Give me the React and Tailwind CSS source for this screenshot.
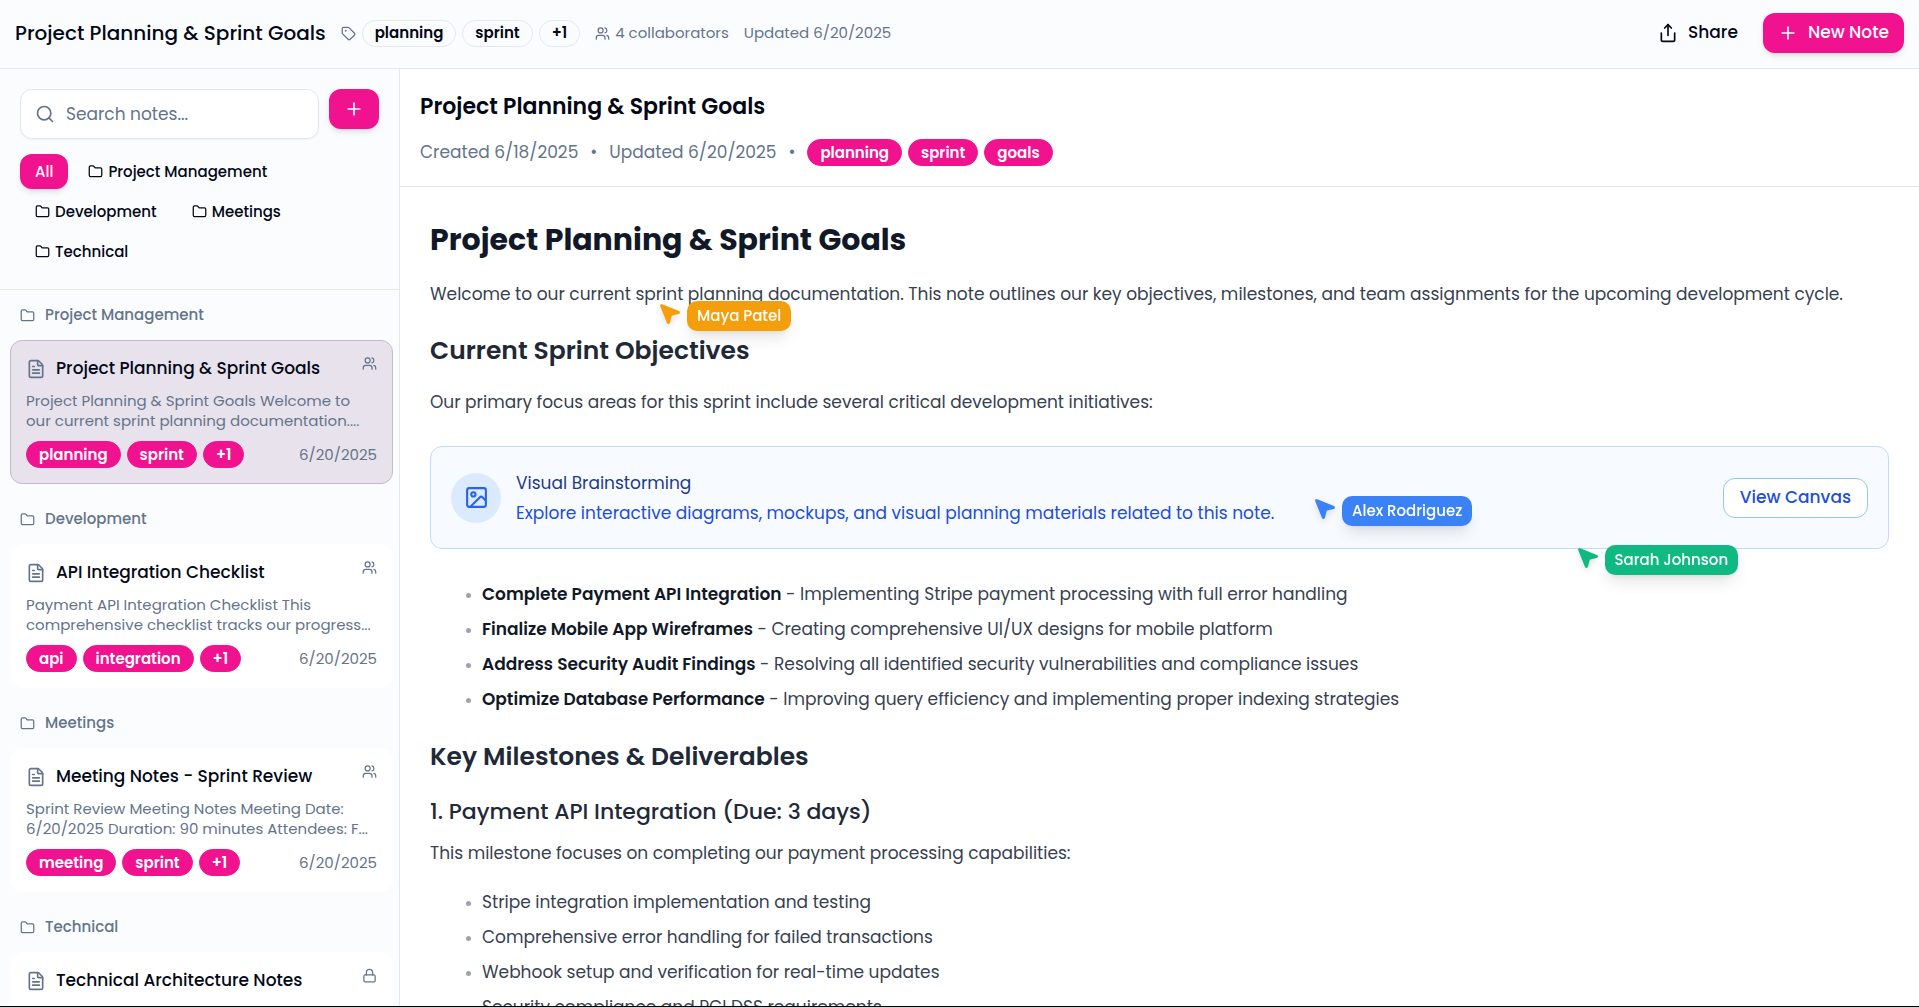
import React, { useState } from 'react';
import { FileText, Folder, Image, Lock, MousePointer2, Plus, Search, Share, Tag, Users } from 'lucide-react';
import clsx from 'clsx';

const categories = ['Project Management', 'Development', 'Meetings', 'Technical'];

const notes = [
  {
    id: 1,
    category: 'Project Management',
    title: 'Project Planning & Sprint Goals',
    preview: 'Project Planning & Sprint Goals Welcome to our current sprint planning documentation....',
    tags: ['planning', 'sprint', '+1'],
    date: '6/20/2025',
    shared: true,
  },
  {
    id: 2,
    category: 'Development',
    title: 'API Integration Checklist',
    preview: 'Payment API Integration Checklist This comprehensive checklist tracks our progress...',
    tags: ['api', 'integration', '+1'],
    date: '6/20/2025',
    shared: true,
  },
  {
    id: 3,
    category: 'Meetings',
    title: 'Meeting Notes - Sprint Review',
    preview: 'Sprint Review Meeting Notes Meeting Date: 6/20/2025 Duration: 90 minutes Attendees: F...',
    tags: ['meeting', 'sprint', '+1'],
    date: '6/20/2025',
    shared: true,
  },
  {
    id: 4,
    category: 'Technical',
    title: 'Technical Architecture Notes',
    preview: '',
    tags: [],
    date: '',
    shared: false,
  },
];

const objectives = [
  ['Complete Payment API Integration', 'Implementing Stripe payment processing with full error handling'],
  ['Finalize Mobile App Wireframes', 'Creating comprehensive UI/UX designs for mobile platform'],
  ['Address Security Audit Findings', 'Resolving all identified security vulnerabilities and compliance issues'],
  ['Optimize Database Performance', 'Improving query efficiency and implementing proper indexing strategies'],
];

const deliverables = [
  'Stripe integration implementation and testing',
  'Comprehensive error handling for failed transactions',
  'Webhook setup and verification for real-time updates',
  'Security compliance and PCI DSS requirements',
];

// Cursor positions are a share of the window
const cursors = [
  { name: 'Maya Patel', x: 34.24, y: 29.9, icon: 'fill-[#f59e0b] text-[#f59e0b]', label: 'bg-[#f59e0b]' },
  { name: 'Alex Rodriguez', x: 68.37, y: 49.26, icon: 'fill-[#3b82f6] text-[#3b82f6]', label: 'bg-[#3b82f6]' },
  { name: 'Sarah Johnson', x: 82.05, y: 54.13, icon: 'fill-[#10b981] text-[#10b981]', label: 'bg-[#10b981]' },
];

const Badge = ({ outline, children }) => (
  <span
    className={clsx(
      'inline-flex h-[27px] items-center rounded-full border px-3 text-[15px] leading-5 font-semibold',
      outline ? 'border-[#e2e8f0] text-[#020817]' : 'border-[#f0128e] bg-[#f0128e] text-white'
    )}
  >
    {children}
  </span>
);

const Header = () => (
  <header className="flex shrink-0 items-center justify-between border-b border-[#e2e8f0] bg-[#fbfcfe] px-[15px] pt-[13px] pb-[15px]">
    <div className="flex items-center gap-[15px]">
      <h1 className="text-xl leading-[30px] font-medium">Project Planning & Sprint Goals</h1>
      <div className="flex items-center gap-[6px]">
        <Tag className="size-[15px] text-[#64748b]" />
        <Badge outline>planning</Badge>
        <Badge outline>sprint</Badge>
        <Badge outline>+1</Badge>
      </div>
      <div className="flex items-center gap-[5px] text-[15px] leading-5 text-[#64748b]">
        <Users className="size-[15px]" />
        <span>4 collaborators</span>
      </div>
      <span className="text-[15px] leading-5 text-[#64748b]">Updated 6/20/2025</span>
    </div>

    <div className="flex items-center gap-[10px]">
      <button type="button" className="flex h-10 items-center gap-[10px] rounded-xl px-[15px] text-[17px] font-medium">
        <Share className="size-5" />
        Share
      </button>
      <button
        type="button"
        className="flex h-10 items-center gap-[10px] rounded-xl bg-[#f0128e] px-[15px] text-[17px] font-medium text-white shadow-md"
      >
        <Plus className="size-5" />
        New Note
      </button>
    </div>
  </header>
);

const NoteCard = ({ note, active, onSelect }) => (
  <button
    type="button"
    onClick={onSelect}
    className={clsx(
      'block w-full rounded-xl border p-[15px] text-left',
      active ? 'border-[#c5b9d3] bg-[#e8e2ec]' : 'border-white bg-white'
    )}
  >
    <div className="mb-[10px] flex items-start justify-between">
      <div className="flex items-center gap-[10px]">
        <FileText className="size-5 text-[#64748b]" />
        <h3 className="text-[17px] leading-[25px] font-medium">{note.title}</h3>
      </div>
      {note.shared ? (
        <Users className="size-[15px] text-[#64748b]" />
      ) : (
        <Lock className="size-[15px] text-[#64748b]" />
      )}
    </div>
    <p className="mb-[10px] line-clamp-2 text-[15px] leading-5 text-[#64748b]">{note.preview}</p>
    <div className="flex items-center justify-between">
      <div className="flex gap-[6px]">
        {note.tags.map((tag) => (
          <Badge key={tag}>{tag}</Badge>
        ))}
      </div>
      <span className="text-[15px] leading-5 text-[#64748b]">{note.date}</span>
    </div>
  </button>
);

const Sidebar = () => {
  const [filter, setFilter] = useState('All');
  const [activeId, setActiveId] = useState(1);
  const visible = filter === 'All' ? categories : [filter];

  return (
    <aside className="flex w-[400px] shrink-0 flex-col border-r border-[#e2e8f0] bg-[#fbfcfe]">
      <div className="border-b border-[#e2e8f0] p-5">
        <div className="mb-[15px] flex items-start gap-[10px]">
          <div className="relative flex-1">
            <Search className="absolute top-[15px] left-[15px] size-5 text-[#64748b]" />
            <input
              type="text"
              aria-label="Search notes"
              placeholder="Search notes..."
              className="block h-[50px] w-full rounded-xl border border-[#e2e8f0] bg-white pr-[15px] pl-[45px] text-[17px] shadow-xs placeholder:text-[#64748b]"
            />
          </div>
          <button
            type="button"
            aria-label="Add note"
            className="flex h-10 w-[50px] items-center justify-center rounded-xl bg-[#f0128e] text-white shadow-md"
          >
            <Plus className="size-5" />
          </button>
        </div>

        <div className="flex flex-wrap gap-[5px]">
          {['All', ...categories].map((name) => (
            <button
              key={name}
              type="button"
              onClick={() => setFilter(name)}
              className={clsx(
                'flex h-[35px] items-center gap-[5px] rounded-xl px-[15px] text-[15px] leading-[21px] font-medium',
                filter === name && 'bg-[#f0128e] text-white shadow-md'
              )}
            >
              {name !== 'All' && <Folder className="size-[15px]" />}
              {name}
            </button>
          ))}
        </div>
      </div>

      <div className="min-h-0 flex-1 overflow-hidden py-[10px] pr-[6px] pl-[10px]">
        {visible.map((category) => (
          <section key={category} className="mb-5">
            <h2 className="mb-[10px] flex items-center gap-[10px] px-[10px] py-[5px] text-[15px] leading-5 font-medium text-[#64748b]">
              <Folder className="size-[15px]" />
              {category}
            </h2>
            {notes
              .filter((note) => note.category === category)
              .map((note) => (
                <NoteCard
                  key={note.id}
                  note={note}
                  active={note.id === activeId}
                  onSelect={() => setActiveId(note.id)}
                />
              ))}
          </section>
        ))}
      </div>
    </aside>
  );
};

const CanvasBanner = () => (
  <div className="my-[30px] flex items-center justify-between rounded-xl border border-[#bfdbfe] bg-[#f7faff] p-5">
    <div className="flex items-center gap-[15px]">
      <div className="flex size-[50px] items-center justify-center rounded-full bg-[#dbeafe]">
        <Image className="size-[25px] text-[#2563eb]" />
      </div>
      <div>
        <h4 className="leading-8 text-[#1e3a8a]">Visual Brainstorming</h4>
        <p className="leading-[29px] text-[#1d4ed8]">
          Explore interactive diagrams, mockups, and visual planning materials related to this note.
        </p>
      </div>
    </div>
    <button
      type="button"
      className="h-10 shrink-0 rounded-xl border border-[#93c5fd] bg-white px-4 font-medium text-[#1d4ed8]"
    >
      View Canvas
    </button>
  </div>
);

const NoteView = () => (
  <main className="flex min-w-0 flex-1 flex-col bg-white">
    <div className="border-b border-[#e2e8f0] p-5">
      <h2 className="mb-[15px] text-[22px] leading-[35px] font-semibold">Project Planning & Sprint Goals</h2>
      <div className="flex items-center gap-3 text-[17px] leading-[27px] text-[#64748b]">
        <span>Created 6/18/2025</span>
        <span>•</span>
        <span>Updated 6/20/2025</span>
        <span>•</span>
        <div className="flex gap-[6px]">
          <Badge>planning</Badge>
          <Badge>sprint</Badge>
          <Badge>goals</Badge>
        </div>
      </div>
    </div>

    <article className="min-h-0 flex-1 overflow-hidden p-[30px] text-[17px] text-[#374151]">
      <h1 className="mb-[18px] text-3xl leading-[45px] font-bold text-[#111827]">Project Planning & Sprint Goals</h1>
      <p className="leading-7">
        Welcome to our current sprint planning documentation. This note outlines our key objectives, milestones, and
        team assignments for the upcoming development cycle.
      </p>

      <h2 className="mt-[25px] mb-5 text-[25px] leading-[35px] font-semibold text-[#1f2937]">
        Current Sprint Objectives
      </h2>
      <p className="leading-7">Our primary focus areas for this sprint include several critical development initiatives:</p>

      <CanvasBanner />

      <ul className="list-disc space-y-[5px] pl-[52px] leading-[30px] marker:text-[13px] marker:text-[#9ca3af]">
        {objectives.map(([name, text]) => (
          <li key={name}>
            <strong className="font-semibold text-[#111827]">{name}</strong> - {text}
          </li>
        ))}
      </ul>

      <h2 className="mt-[25px] mb-5 text-[25px] leading-[35px] font-semibold text-[#1f2937]">
        Key Milestones & Deliverables
      </h2>
      <h3 className="mb-[10px] text-[22px] leading-[35px] font-medium text-[#1f2937]">
        1. Payment API Integration (Due: 3 days)
      </h3>
      <p className="mb-5 leading-7">This milestone focuses on completing our payment processing capabilities:</p>
      <ul className="list-disc space-y-[5px] pl-[52px] leading-[30px] marker:text-[13px] marker:text-[#9ca3af]">
        {deliverables.map((item) => (
          <li key={item}>{item}</li>
        ))}
      </ul>
    </article>
  </main>
);

const LiveCursors = () => (
  <div className="pointer-events-none fixed inset-0">
    {cursors.map((cursor) => (
      <div
        key={cursor.name}
        className="absolute flex items-start gap-[5px]"
        style={{ left: `${cursor.x}%`, top: `${cursor.y}%` }}
      >
        <MousePointer2 className={clsx('size-[25px] drop-shadow-md', cursor.icon)} />
        <span
          className={clsx(
            'rounded-[10px] px-[10px] py-[5px] text-[15px] leading-5 font-medium whitespace-nowrap text-white shadow-lg',
            cursor.label
          )}
        >
          {cursor.name}
        </span>
      </div>
    ))}
  </div>
);

export default function App() {
  return (
    <div className="flex h-screen flex-col overflow-hidden border-b border-black font-[Poppins,Inter,sans-serif] text-[#020817]">
      <Header />
      <div className="flex min-h-0 flex-1">
        <Sidebar />
        <NoteView />
      </div>
      <LiveCursors />
    </div>
  );
}
